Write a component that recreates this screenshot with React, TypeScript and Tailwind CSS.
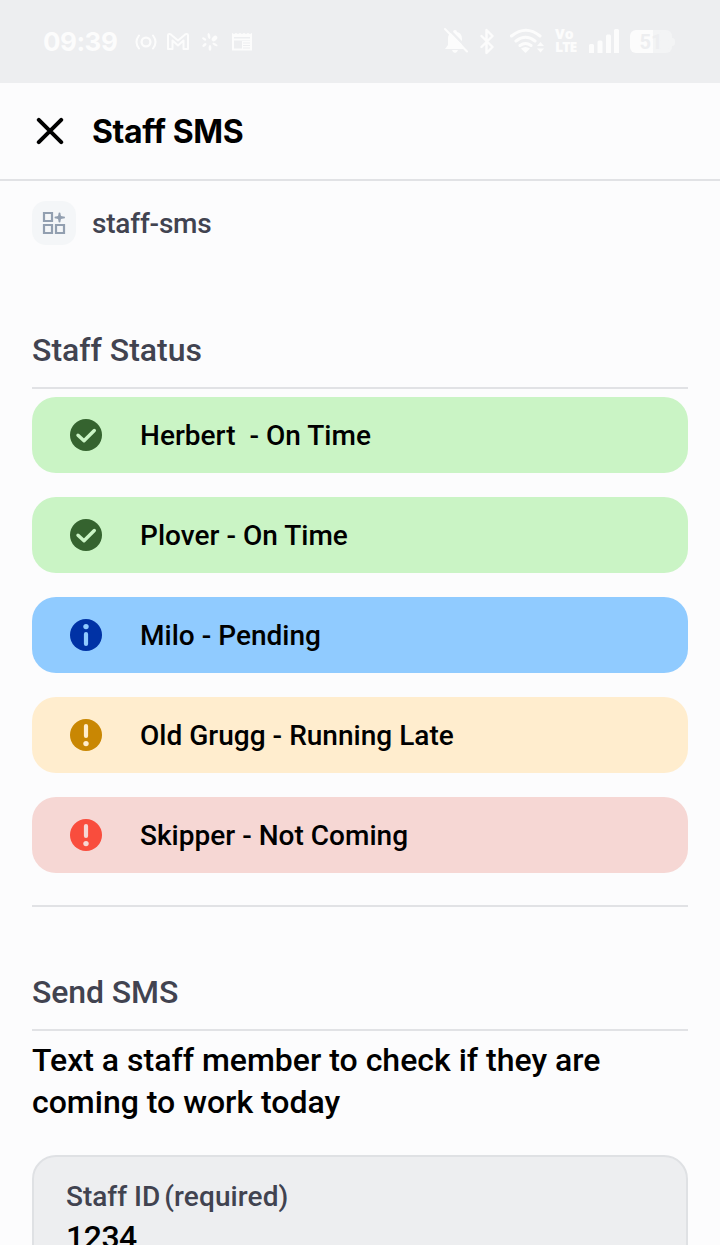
import type { ReactNode } from "react";

type Kind = "ok" | "info" | "warn" | "error";

const rows: { kind: Kind; text: string; bg: string }[] = [
  { kind: "ok", text: "Herbert  - On Time", bg: "bg-[#caf4c5]" },
  { kind: "ok", text: "Plover - On Time", bg: "bg-[#caf4c5]" },
  { kind: "info", text: "Milo - Pending", bg: "bg-[#90cbff]" },
  { kind: "warn", text: "Old Grugg - Running Late", bg: "bg-[#ffedce]" },
  { kind: "error", text: "Skipper - Not Coming", bg: "bg-[#f6d7d4]" },
];

function StatusIcon({ kind }: { kind: Kind }) {
  return (
    <svg className="size-8 shrink-0" viewBox="0 0 32 32" fill="none">
      {kind === "ok" && (
        <>
          <circle cx="16" cy="16" r="16" fill="#35632f" />
          <path d="M8 16.2l6 5.6L24.3 11.5" stroke="#caf4c5" strokeWidth="3.400" strokeLinecap="round" strokeLinejoin="round" />
        </>
      )}
      {kind === "info" && (
        <>
          <circle cx="16" cy="16" r="16" fill="#0032a5" />
          <circle cx="16" cy="7.6" r="2.7" fill="#90cbff" />
          <path d="M16 15v10" stroke="#90cbff" strokeWidth="4.200" strokeLinecap="round" />
        </>
      )}
      {(kind === "warn" || kind === "error") && (
        <>
          <circle cx="16" cy="16" r="16" fill={kind === "warn" ? "#c98703" : "#f94d3d"} />
          <path d="M16 7v10" stroke={kind === "warn" ? "#ffedce" : "#f6d7d4"} strokeWidth="4.200" strokeLinecap="round" />
          <circle cx="16" cy="24.6" r="2.7" fill={kind === "warn" ? "#ffedce" : "#f6d7d4"} />
        </>
      )}
    </svg>
  );
}

function Glyph({ width, children }: { width: number; children: ReactNode }) {
  return (
    <svg width={width} height="28" viewBox={`0 0 ${width} 28`} fill="none" className="shrink-0">
      {children}
    </svg>
  );
}

function StatusBar() {
  return (
    <div className="flex h-[83px] shrink-0 items-center bg-[#edeef0] pl-[43px] pr-[45px] text-[#fcfcfc]">
      <span className="w-[92px] whitespace-nowrap font-['Inter'] text-[26px] font-bold leading-7 tracking-[-0.5px]">09:39</span>
      <div className="flex items-center gap-3">
        <div className="flex gap-[10px]">
          <Glyph width={22}>
            <g stroke="#fcfcfc" strokeWidth="2" strokeLinecap="round">
              <circle cx="11" cy="14" r="4.4" strokeWidth="2.3" />
              <path d="M4 7.5Q-1 14 4 20.500M18 7.500q5 6.500 0 13" />
            </g>
          </Glyph>
          <Glyph width={22}>
            <path d="M1 21V7.500Q1 5.500 3.500 6.200L11 12.500l7.500-6.300Q21 5.500 21 7.500V21h-4.500v-8.500L11 17.500l-5.500-5V21z" stroke="#fcfcfc" strokeWidth="2" strokeLinejoin="round" />
          </Glyph>
        </div>
        <Glyph width={18}>
          <g fill="#fcfcfc">
            <ellipse cx="8" cy="8" rx="1.300" ry="3" transform="rotate(-12 8 8)" />
            <ellipse cx="3.200" cy="11" rx="1.200" ry="2.300" transform="rotate(-60 3.200 11)" />
            <ellipse cx="3.400" cy="17" rx="1.300" ry="2.500" transform="rotate(50 3.400 17)" />
            <ellipse cx="9" cy="20" rx="1.400" ry="3" />
            <ellipse cx="14" cy="16.500" rx="1.200" ry="2.800" transform="rotate(-65 14 16.500)" />
            <ellipse cx="13.500" cy="10.500" rx="3.200" ry="2.200" transform="rotate(-45 13.500 10.500)" />
          </g>
        </Glyph>
        <Glyph width={22}>
          <path d="M2 7.500v14h18v-14M1.500 11.500h19" stroke="#fcfcfc" strokeWidth="2" />
          <path d="M1 5l2 1 2-1 2 1 2-1 2 1 2-1 2 1 2-1 2 1 2-1v4H1zM11 13h10v9H11z" fill="#fcfcfc" />
          <path d="M12 15h7M12 17.500h7M12 20h7" stroke="#edeef0" />
        </Glyph>
      </div>
      <div className="ml-auto flex items-center">
        <Glyph width={26}>
          <path d="M11 2a2 2 0 0 1 2 2c4 1 5 4 5 7v6l3 4H1l3-4v-6c0-3 1-6 5-7a2 2 0 0 1 2-2zM8 22h6q-1 3-3 3t-3-3z" fill="#fcfcfc" />
          <path d="M3.500 0l21.500 22" stroke="#edeef0" strokeWidth="2.500" />
          <path d="M1 1l22 22.500" stroke="#fcfcfc" strokeWidth="2" strokeLinecap="round" />
        </Glyph>
        <span className="w-[10px]" />
        <Glyph width={15}>
          <path d="M1.500 8l11 11-6 6V2l6 6-11 11" stroke="#fcfcfc" strokeWidth="2.400" strokeLinejoin="round" strokeLinecap="round" />
        </Glyph>
        <span className="w-[15px]" />
        <Glyph width={35}>
          <g transform="translate(-1 0)" fill="#fcfcfc">
            <path d="M2.500 8Q17 -3.500 31 8M7 13q9.500-7.500 19 0M11 17.500q5.500-4 11 0" fill="none" stroke="#fcfcfc" strokeWidth="3" strokeLinecap="round" />
            <path d="M12 20.500q4.500-3 9 0L16.500 25zM28 18l3.500-4 3.500 4zM28 20.500h7l-3.500 4z" />
          </g>
        </Glyph>
        <div className="ml-[10px] flex h-[29px] w-[24px] flex-col font-['Open_Sans'] text-[14px] font-extrabold leading-[13px]">
          <span className="h-[13px]">Vo</span>
          <span className="h-[16px] leading-[14px] tracking-[-0.9px]">LTE</span>
        </div>
        <span className="w-[10px]" />
        <Glyph width={31}>
          <path d="M0 17.500q0-1.500 1.500-1.500h2q1.500 0 1.500 1.500V25H0zM8.500 14q0-1.500 1.500-1.500h2q1.500 0 1.500 1.500v11h-5zM17 8q0-1.500 1.500-1.500h2Q22 6.500 22 8v17h-5zM25 2.500Q25 1 26.500 1h2Q30 1 30 2.500V25h-5z" fill="#fcfcfc" />
        </Glyph>
        <div className="ml-[10px] flex h-[23px] w-[42px] items-center justify-center rounded-[6px] bg-linear-to-r from-[#fcfcfc] from-55% to-[#f3f4f5] to-55% font-['Roboto'] text-[20px] font-bold text-[#edeef0]">51</div>
        <span className="h-2 w-[3px] rounded-r-full bg-[#f3f4f5]" />
      </div>
    </div>
  );
}

export default function App() {
  return (
    <div className="flex h-[1245px] w-[720px] flex-col overflow-hidden bg-[#fcfcfd] font-['Roboto',sans-serif] text-black">
      <StatusBar />
      <header className="flex h-[98px] shrink-0 items-center border-b-2 border-[#e1e2e5] pl-9">
        <svg className="size-7" viewBox="0 0 28 28" fill="none">
          <path d="M2.800 2.800l22.400 22.400M25.200 2.800l-22.400 22.400" stroke="#000" strokeWidth="4" strokeLinecap="round" />
        </svg>
        <h1 className="ml-7 pt-0.5 font-['Inter'] text-[32px] font-bold leading-10 tracking-[-0.4px]">Staff SMS</h1>
      </header>
      <main className="flex flex-col px-8 pt-5">
        <div className="flex h-11 items-center gap-4">
          <div className="flex size-11 items-center justify-center rounded-[14px] bg-[#f4f6f8]">
            <svg className="size-6" viewBox="0 0 24 24" fill="none" stroke="#929fb0" strokeWidth="2.200">
              <path d="M2 2h8v8H2zM2 14h8v8H2zM14 14h8v8h-8z" />
              <path d="M17.500 2l1.500 3 3.500 1.500L19 8l-1.500 3L16 8l-3-1.500L16 5z" fill="#929fb0" stroke="none" />
              <path d="M17.500 2.500v8M13.500 6.500h8.500" strokeWidth="2" strokeLinecap="round" />
            </svg>
          </div>
          <span className="pt-0.5 text-[28px] font-medium leading-10 tracking-[-0.2px] text-[#414350]">staff-sms</span>
        </div>
        <h2 className="mt-20 h-16 border-b-2 border-[#e1e2e5] pt-[5px] text-[32px] font-medium leading-10 text-[#414350]">Staff Status</h2>
        <div className="mt-2 flex flex-col gap-6">
          {rows.map((row) => (
            <div key={row.text} className={`flex h-[76px] items-center gap-[38px] rounded-[24px] pl-[38px] ${row.bg}`}>
              <StatusIcon kind={row.kind} />
              <span className="whitespace-pre pt-0.5 text-[28px] font-medium leading-10 tracking-[0.02px]">{row.text}</span>
            </div>
          ))}
        </div>
        <div className="mt-8 h-0.5 bg-[#e1e2e5]" />
        <h2 className="mt-[62px] h-[62px] border-b-2 border-[#e1e2e5] pt-[3px] text-[32px] font-medium leading-10 tracking-[-0.1px] text-[#414350]">Send SMS</h2>
        <p className="mt-2 text-[32px] font-medium leading-[42px]">
          Text a staff member to check if they are
          <br />
          coming to work today
        </p>
        <div className="mt-8 h-[140px] rounded-[24px] border-2 border-[#dfe1e4] bg-[#edeef0] px-8 pt-5">
          <div className="flex gap-1 text-[28px] font-medium leading-10 text-[#414350]">
            <span>Staff ID</span>
            <span className="tracking-[0.1px]">(required)</span>
          </div>
          <div className="text-[32px] font-medium leading-10 tracking-[-0.5px]">1234</div>
        </div>
      </main>
    </div>
  );
}
